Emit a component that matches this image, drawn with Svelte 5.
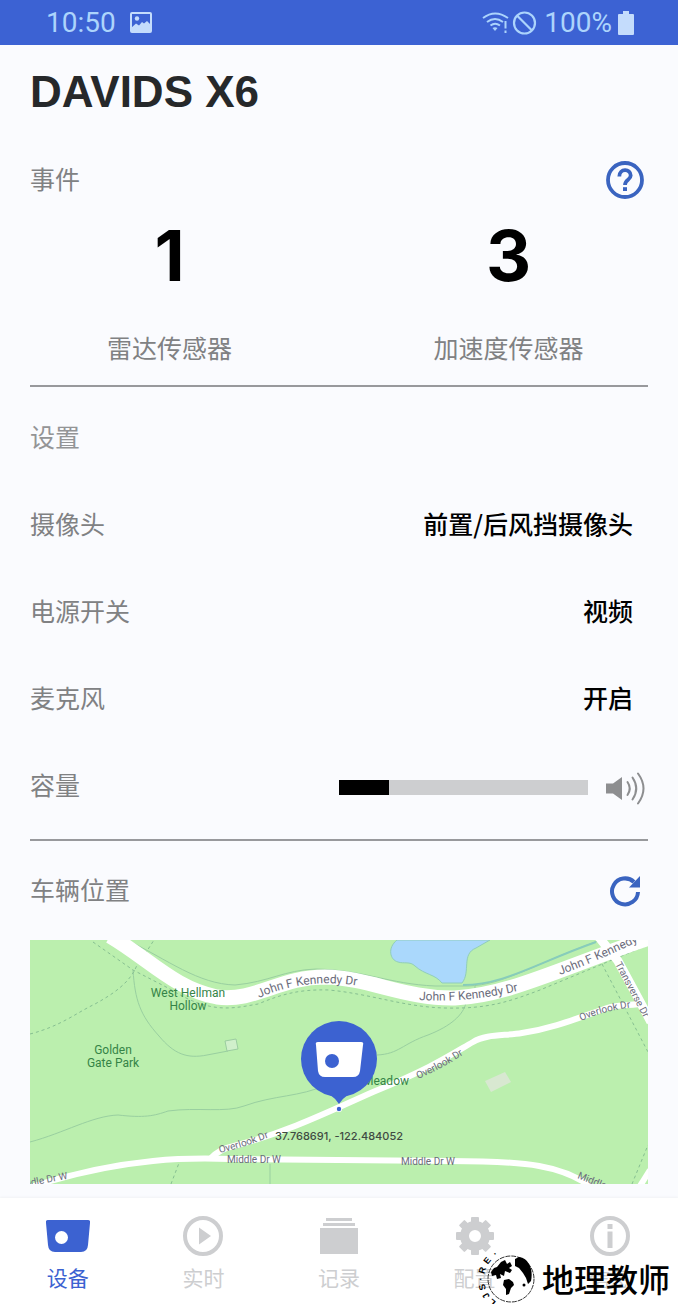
<script lang="ts">
	interface Setting {
		label: string;
		value: string;
	}

	const settings: Setting[] = [
		{ label: '摄像头', value: '前置/后风挡摄像头' },
		{ label: '电源开关', value: '视频' },
		{ label: '麦克风', value: '开启' }
	];

	const events = [
		{ count: 1, label: '雷达传感器' },
		{ count: 3, label: '加速度传感器' }
	];

	const tabs = [
		{ id: 'device', label: '设备' },
		{ id: 'live', label: '实时' },
		{ id: 'records', label: '记录' },
		{ id: 'config', label: '配置' },
		{ id: 'info', label: '信息' }
	];

	const gearTeeth = [0, 45, 90, 135, 180, 225, 270, 315];

	const ringLetters = [
		{ char: 'L', angle: -141 },
		{ char: 'J', angle: -124 },
		{ char: 'S', angle: -106 },
		{ char: '·', angle: -90 },
		{ char: 'R', angle: -73 },
		{ char: 'E', angle: -52 },
		{ char: '·', angle: -32 }
	];

	let activeTab = $state('device');
	let volume = $state(1);
	const maxVolume = 5;

	let volumePercent = $derived((volume / maxVolume) * 100);
</script>

<div class="app">
	<!-- Status bar -->
	<header class="status-bar">
		<div class="status-group">
			<span>10:50</span>
			<svg class="picture-icon" width="22" height="21" viewBox="0 0 22 21">
				<rect x="1" y="1" width="20" height="19" rx="1" fill="none" stroke="currentColor" stroke-width="2" />
				<circle cx="7" cy="6.500" r="2.200" fill="currentColor" />
				<path d="M1 16 L6 11.500 L9 13.500 L12 10 L14 11.500 L17 9 L21 13 V20 H1Z" fill="currentColor" />
			</svg>
		</div>
		<div class="status-group status-right">
			<svg width="56" height="26" viewBox="0 0 56 26" fill="none" stroke="currentColor">
				<path d="M1 8 Q13 -1 26 8" stroke-width="2" />
				<path d="M5 12 Q13 6 21 12" stroke-width="2" />
				<path d="M8.500 15.500 Q13 12 18 15.500" stroke-width="2" />
				<path d="M10.500 18 Q13 16.500 15.500 18 L13 21Z" fill="currentColor" stroke="none" />
				<path d="M23.500 11 V18.500 M23.500 20.500 V23" stroke-width="2" />
				<circle cx="42.500" cy="13" r="10.500" stroke-width="2.200" />
				<path d="M35 5.500 L50 20.500" stroke-width="2.200" />
			</svg>
			<span>100%</span>
			<svg class="battery-icon" width="16" height="24" viewBox="0 0 16 24">
				<path d="M5 0 H11 V3 H15 Q16 3 16 4 V23 Q16 24 15 24 H1 Q0 24 0 23 V4 Q0 3 1 3 H5Z" fill="currentColor" />
			</svg>
		</div>
	</header>

	<main>
		<h1>DAVIDS X6</h1>

		<!-- Events -->
		<section class="events">
			<div class="section-head">
				<h2>事件</h2>
				<button class="icon-button" aria-label="帮助">
					<svg width="38" height="38" viewBox="0 0 38 38" fill="none" stroke="currentColor">
						<circle cx="19" cy="19" r="17" stroke-width="3.800" />
						<path d="M13.300 15.500 C13.300 7.300 24.700 7.300 24.700 14.500 C24.700 19 19 18.500 19 24" stroke-width="3.800" />
						<path d="M19 26.200 V30" stroke-width="4" />
					</svg>
				</button>
			</div>
			<div class="counts">
				{#each events as event}
					<div class="count">
						<strong>{event.count}</strong>
						<span>{event.label}</span>
					</div>
				{/each}
			</div>
		</section>

		<!-- Settings -->
		<section class="settings">
			<div class="row">
				<h2 class="faded">设置</h2>
			</div>
			{#each settings as setting}
				<div class="row">
					<span>{setting.label}</span>
					<span class="value">{setting.value}</span>
				</div>
			{/each}
			<div class="row">
				<label for="volume">容量</label>
				<div class="volume">
					<input
						id="volume"
						type="range"
						min="0"
						max={maxVolume}
						bind:value={volume}
						style="--fill: {volumePercent}%"
					/>
					<svg width="40" height="34" viewBox="0 0 40 34">
						<path d="M0 12.500 H7 L16 6 V29 L7 22.500 H0Z" fill="#8d8e90" />
						<g fill="none" stroke="#8d8e90" stroke-width="2" stroke-linecap="round">
							<path d="M21.500 11 Q26 17.500 21.500 24" />
							<path d="M26.500 6.500 Q34 17.500 26.500 28.500" />
							<path d="M32 2.500 Q43 17.500 32 32.500" />
						</g>
					</svg>
				</div>
			</div>
		</section>

		<!-- Vehicle location -->
		<section class="location">
			<div class="section-head">
				<h2>车辆位置</h2>
				<button class="icon-button" aria-label="刷新">
					<svg width="32" height="32" viewBox="0 0 32 32">
						<path d="M29 17 A13 13 0 1 1 25 7" fill="none" stroke="currentColor" stroke-width="4" />
						<path d="M31 1 V12.500 H20Z" fill="currentColor" />
					</svg>
				</button>
			</div>

			<svg class="map" viewBox="0 0 618 244" role="img" aria-label="车辆位置">
				<defs>
					<path id="kennedy-west" d="M229 58 Q275 37 330 46" />
					<path id="kennedy-mid" d="M389 60 Q440 63 492 50" />
					<path id="kennedy-east" d="M530 35 Q570 20 620 -4" />
					<path id="overlook-west" d="M190 213 Q215 207 245 195" />
					<path id="overlook-mid" d="M388 139 Q412 129 440 110" />
					<path id="overlook-east" d="M551 81 Q575 70 606 67" />
				</defs>

				<rect width="618" height="244" fill="#bbefae" />

				<!-- Lake -->
				<path d="M367 0 C357 8 360 20 368 22 C374 24 380 21 385 26 C395 35 405 34 412 43 H432 C441 32 431 14 446 8 L460 0Z" fill="#aad8fc" stroke="#91ceb9" />

				<!-- Footpaths -->
				<g fill="none" stroke="#99cfa0">
					<path d="M97 0 C138 20 168 44 205 45 C239 42 254 30 286 29 C334 30 359 44 405 46 H438 C474 45 504 24 568 1" />
					<path d="M103 30 C105 60 110 75 129 96 C144 114 157 119 177 115 L198 111" />
					<path d="M0 202 C34 193 62 176 88 175 C114 178 124 176 138 171 C167 167 196 173 214 166 C244 155 270 157 296 145" />
					<path d="M347 115 C369 114 372 104 398 95 C421 86 433 75 436 63" />
					<path d="M445 46 V58" />
					<path d="M240 224 V244" />
				</g>
				<path d="M433 45 C474 45 504 24 566 2" fill="none" stroke="#87ccbb" stroke-width="2" />
				<g fill="none" stroke="#86bf91" stroke-dasharray="3 3">
					<path d="M63 2 L103 30 L140 49 C181 75 204 68 228 64 C250 55 268 49 299 50 C341 54 374 67 415 68 C458 69 478 62 510 50 L618 5" />
					<path d="M0 94 C31 86 46 73 65 64 C83 54 100 43 107 25" />
					<path d="M115 14 L124 0" />
					<path d="M572 24 L618 112" />
					<path d="M141 244 L149 223 M602 244 L618 205" />
				</g>

				<!-- Roads -->
				<g fill="none" stroke="#ffffff">
					<path d="M80 -4 C119 19 145 49 187 57 C225 62 250 37 295 37 C340 38 375 59 425 58 C480 55 528 29 622 -3" stroke-width="15" />
					<path d="M568 -4 L588 21 L621 82" stroke-width="9" />
					<path d="M-2 248 C40 234 82 225 123 221 S178 219 210 219 L420 221 C499 221 532 226 560 246" stroke-width="6" />
					<path d="M180 219 Q189 209 204 206 C258 192 300 171 343 152 C402 128 422 114 443 102 C456 94 474 96 492 93 C525 88 550 77 577 68 C590 64 603 66 614 63" stroke-width="6" />
					<path d="M610 246 L620 230" stroke-width="6" />
				</g>

				<!-- Buildings -->
				<path d="M195 101 L206 99 L208 109 L197 111Z" fill="#d0f0cb" stroke="#9bcda0" />
				<path d="M455 141 L475 132 L481 142 L461 152Z" fill="#d8e8d1" />

				<g class="street">
					<text font-size="12"><textPath href="#kennedy-west">John F Kennedy Dr</textPath></text>
					<text font-size="12"><textPath href="#kennedy-mid">John F Kennedy Dr</textPath></text>
					<text font-size="12"><textPath href="#kennedy-east">John F Kennedy Dr</textPath></text>
					<text><textPath href="#overlook-west">Overlook Dr</textPath></text>
					<text><textPath href="#overlook-mid">Overlook Dr</textPath></text>
					<text><textPath href="#overlook-east">Overlook Dr</textPath></text>
					<text transform="translate(585 24) rotate(62)">Transverse Dr</text>
					<text x="197" y="223">Middle Dr W</text>
					<text x="371" y="225">Middle Dr W</text>
					<text transform="translate(-15 249) rotate(-11)">Middle Dr W</text>
					<text transform="translate(547 238) rotate(22)">Middle Dr W</text>
				</g>

				<g class="place">
					<text x="158" y="57">West Hellman</text>
					<text x="158" y="70">Hollow</text>
					<text x="83" y="114">Golden</text>
					<text x="83" y="127">Gate Park</text>
					<text x="356" y="145">Meadow</text>
				</g>

				<!-- Device marker -->
				<circle cx="309" cy="119" r="38" fill="#3c62d1" />
				<path d="M299 154 Q305 158 309 164 Q313 158 319 154Z" fill="#3c62d1" />
				<path d="M288 102 H331 Q334 102 333 105 L330 131 Q329 137 323 137 H295 Q289 137 288 131 L286 105 Q285 102 288 102Z" fill="#ffffff" />
				<circle cx="302" cy="121" r="7" fill="#3c62d1" />
				<circle cx="309" cy="169" r="3" fill="#ffffff" />
				<circle cx="309" cy="169" r="2.200" fill="#3c62d1" />
				<text class="coords" x="309" y="200">37.768691, -122.484052</text>
			</svg>
		</section>
	</main>

	<!-- Bottom tabs -->
	<nav>
		{#each tabs as tab}
			<a href="#{tab.id}" class:active={activeTab === tab.id} onclick={() => (activeTab = tab.id)}>
				<svg width="44" height="42" viewBox="0 0 44 42" fill="currentColor">
					{#if tab.id === 'device'}
						<path d="M2 5 H42 Q44.500 5 44 8 L42 30 Q41.500 37 35 37 H9 Q2.500 37 2 30 L0 8 Q-0.500 5 2 5Z" />
						<circle cx="15.500" cy="22.500" r="6.500" fill="#ffffff" />
					{:else if tab.id === 'live'}
						<circle cx="22" cy="21" r="18" fill="none" stroke="currentColor" stroke-width="4" />
						<path d="M18 12.500 L30 21 L18 29.500Z" />
					{:else if tab.id === 'records'}
						<path d="M9 3 H35 V6 H9Z M6 8 H38 V11 H6Z M3 13 H41 V39 H3Z" />
					{:else if tab.id === 'config'}
						{#each gearTeeth as angle}
							<rect x="18" y="2" width="8" height="10" rx="1" transform="rotate({angle} 22 21)" />
						{/each}
						<circle cx="22" cy="21" r="10.500" fill="none" stroke="currentColor" stroke-width="9" />
					{:else}
						<circle cx="22" cy="21" r="18" fill="none" stroke="currentColor" stroke-width="4" />
						<path d="M19.500 9 H24.500 V14 H19.500Z M19.500 16.500 H24.500 V33 H19.500Z" />
					{/if}
				</svg>
				<span>{tab.label}</span>
			</a>
		{/each}

		<div class="stamp">
			<svg width="66" height="52" viewBox="0 0 66 52">
				<circle cx="39" cy="27" r="23" fill="none" stroke="#333333" stroke-width="1" stroke-dasharray="5 1" />
				<path d="M19 20 L22 16 L25 15 L29 10 L33 8 L35 12 L38 10 L40 14 L37 16 L40 18 L38 21 L33 19 L32 24 L28 22 L29 26 L25 27 L24 23 L20 24Z" />
				<path d="M32 28 L37 27 L41 30 L42 33 L39 36 L37 42 L34 43 L34 37 L31 33Z" />
				<path d="M43 7 L47 5 Q54 6 57 12 Q61 19 59 29 L56 32 L54 26 L51 21 L47 16 L43 14Z" />
				<circle cx="52" cy="33" r="1.500" />
				{#each ringLetters as letter}
					<text x="39" y="0" transform="rotate({letter.angle} 39 27)">{letter.char}</text>
				{/each}
			</svg>
			<span>地理教师</span>
		</div>
	</nav>
</div>

<style>
	:global(body) {
		margin: 0;
		background: #fafbfe;
	}

	.app {
		min-height: 100vh;
		display: flex;
		flex-direction: column;
		font-family: 'Noto Sans CJK SC', sans-serif;
		font-size: 25px;
		color: #808183;
		overflow: hidden;
	}

	.status-bar {
		display: flex;
		justify-content: space-between;
		align-items: center;
		height: 45px;
		padding: 0 44px 0 46px;
		background: #3c62d3;
		color: #acd4fc;
		font-family: Roboto, sans-serif;
		font-size: 28px;
	}

	.status-group {
		display: flex;
		align-items: center;
		gap: 14px;
	}

	.status-right {
		gap: 6px;
	}

	.picture-icon,
	.battery-icon {
		color: #c4dcfc;
	}

	main {
		flex: 1;
	}

	h1 {
		margin: 0;
		padding: 17px 30px 0;
		font-family: 'Liberation Sans', sans-serif;
		font-size: 44px;
		line-height: 60px;
		color: #26282a;
	}

	h2 {
		margin: 0;
		font-size: 25px;
		font-weight: 400;
		line-height: 36px;
	}

	.faded {
		color: #939496;
	}

	.section-head {
		display: flex;
		justify-content: space-between;
		align-items: flex-start;
		height: 40px;
	}

	.icon-button {
		display: flex;
		justify-content: center;
		align-items: center;
		width: 46px;
		height: 40px;
		padding: 0;
		border: none;
		background: none;
		color: #3a64c0;
		cursor: pointer;
	}

	.events,
	.settings {
		margin: 0 30px;
		border-bottom: 2px solid #98999c;
	}

	.events {
		padding: 38px 0 20px;
	}

	.counts {
		display: grid;
		grid-template-columns: 1fr 1fr;
		margin: 16px -30px 0;
	}

	.count {
		display: flex;
		flex-direction: column;
		align-items: center;
		gap: 33px;
		line-height: 36px;
	}

	.count strong {
		font-family: Inter, sans-serif;
		font-size: 70px;
		line-height: 80px;
		color: #000000;
	}

	.settings {
		padding: 5px 0 12px;
	}

	.row {
		display: flex;
		justify-content: space-between;
		align-items: center;
		height: 87px;
	}

	.value {
		padding-right: 15px;
		font-weight: 500;
		color: #000000;
	}

	.volume {
		display: flex;
		align-items: center;
		gap: 18px;
		width: 50%;
		padding: 8px 2px 0 0;
		box-sizing: border-box;
	}

	.volume input {
		flex: 1;
		min-width: 0;
		height: 15px;
		margin: 0;
		appearance: none;
		background: linear-gradient(to right, #000000 var(--fill), #cdced0 var(--fill));
		cursor: pointer;
	}

	.volume input::-webkit-slider-thumb {
		appearance: none;
		width: 1px;
		height: 15px;
		background: transparent;
	}

	.location {
		padding: 30px 30px 14px;
	}

	.map {
		display: block;
		width: 100%;
		margin-top: 29px;
		font-family: Roboto, sans-serif;
	}

	.street {
		font-size: 10px;
		fill: #6b6c7b;
	}

	.place {
		font-size: 12px;
		fill: #358447;
		text-anchor: middle;
	}

	.coords {
		font-family: Inter, sans-serif;
		font-size: 11px;
		font-weight: 500;
		fill: #3f4b43;
		text-anchor: middle;
	}

	nav {
		position: relative;
		display: grid;
		grid-template-columns: repeat(5, 1fr);
		height: 106px;
		background: #ffffff;
		box-shadow: 0 -1px 2px #f1f2f5;
	}

	nav a {
		display: flex;
		flex-direction: column;
		align-items: center;
		gap: 4px;
		padding-top: 17px;
		font-size: 21px;
		line-height: 32px;
		color: #cdced0;
		text-decoration: none;
	}

	nav a.active {
		color: #3c62d1;
	}

	.stamp {
		position: absolute;
		right: 8px;
		bottom: 0;
		display: flex;
		align-items: center;
		gap: 4px;
		font-size: 32px;
		font-weight: 500;
		line-height: 44px;
		color: #000000;
		pointer-events: none;
	}

	.stamp text {
		font-family: 'Liberation Sans', sans-serif;
		font-size: 9px;
		font-weight: 700;
		text-anchor: middle;
	}
</style>
